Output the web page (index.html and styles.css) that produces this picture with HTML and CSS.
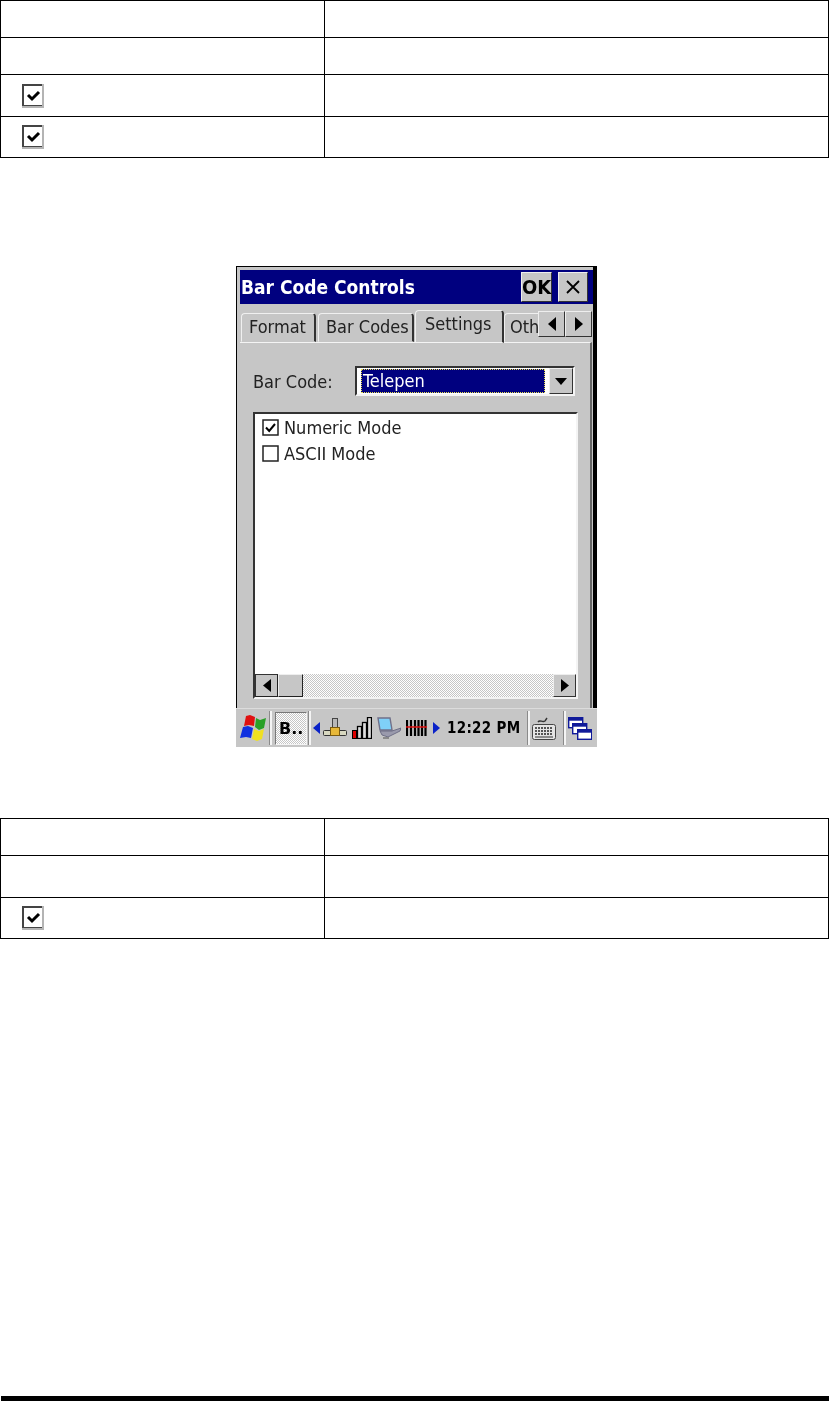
FILE: index.html
```html
<!DOCTYPE html>
<html lang="en">

<head>
	<meta charset="UTF-8">
	<title>Bar Code Controls</title>
	<link rel="stylesheet" href="styles.css">
</head>

<body>
	<table class="opts">
		<tr class="row-a"><td></td><td></td></tr>
		<tr class="row-a"><td></td><td></td></tr>
		<tr class="row-b"><td><svg class="tick" viewBox="0 0 22 24"><use href="#tick"></use></svg></td><td></td></tr>
		<tr class="row-c"><td><svg class="tick" viewBox="0 0 22 24"><use href="#tick"></use></svg></td><td></td></tr>
	</table>

	<div class="screen">
		<div class="window">
			<div class="title">
				<span class="title-text">Bar Code Controls</span>
				<span class="btn btn-ok">OK</span>
				<span class="btn btn-x">
					<svg width="18" height="18" viewBox="0 0 18 18"><path d="M3 3 15 15M15 3 3 15" stroke="#000" stroke-width="1.8" fill="none"/></svg>
				</span>
			</div>

			<div class="tabs">
				<span class="tab tab-format">Format</span>
				<span class="tab tab-codes">Bar Codes</span>
				<span class="tab tab-active">Settings</span>
				<span class="tab tab-other">Oth</span>
				<span class="arrow"><svg width="10" height="14" viewBox="0 0 10 14"><path d="M9 0V14L1 7Z"/></svg></span>
				<span class="arrow"><svg width="10" height="14" viewBox="0 0 10 14"><path d="M1 0V14L9 7Z"/></svg></span>
			</div>

			<div class="panel">
				<div class="combo-row">
					<span class="combo-label">Bar Code:</span>
					<div class="combo">
						<span class="combo-value">Telepen</span>
						<span class="combo-btn"><svg width="12" height="7" viewBox="0 0 12 7"><path d="M0 0H12L6 7Z"/></svg></span>
					</div>
				</div>

				<div class="list">
					<div class="list-items">
						<div class="item">
							<svg class="box" viewBox="0 0 17 17"><rect x="1" y="1" width="15" height="15" fill="#fff" stroke="#222" stroke-width="1.5"/><path d="M4 8.5 7.2 12 13 5" stroke="#000" stroke-width="2" fill="none"/></svg>
							Numeric Mode
						</div>
						<div class="item">
							<svg class="box" viewBox="0 0 17 17"><rect x="1" y="1" width="15" height="15" fill="#fff" stroke="#222" stroke-width="1.5"/></svg>
							ASCII Mode
						</div>
					</div>
					<div class="hscroll">
						<span class="sb-btn"><svg width="8" height="13" viewBox="0 0 8 13"><path d="M8 0V13L0 6.5Z"/></svg></span>
						<span class="sb-thumb"></span>
						<span class="sb-track"></span>
						<span class="sb-btn sb-right"><svg width="8" height="13" viewBox="0 0 8 13"><path d="M0 0V13L8 6.5Z"/></svg></span>
					</div>
				</div>
			</div>
		</div>

		<div class="taskbar">
			<!-- start flag -->
			<svg class="ic-flag" width="26" height="26" viewBox="0 0 26 26">
				<path d="M6 1 10 0 15 2 14 11 9 10 4 11Z" fill="#e01010"/>
				<path d="M16 3 20 5 26 3 24 13 19 15 15 12Z" fill="#2aa028"/>
				<path d="M3 12 8 11 13 13 11 23 6 22 0 23Z" fill="#1030e0"/>
				<path d="M14 14 19 16 24 14 22 24 17 26 12 24Z" fill="#f0e020"/>
			</svg>
			<span class="sep sep-a"></span>
			<span class="task-btn">B..</span>
			<span class="sep sep-b"></span>

			<svg class="ic-tri-l" width="7" height="12" viewBox="0 0 7 12"><path d="M7 0V12L0 6Z" fill="#0a22c8"/></svg>

			<svg class="ic-net" width="24" height="20" viewBox="0 0 24 20">
				<rect x="9.5" y=".5" width="5" height="11" fill="#b8b8b8" stroke="#444"/>
				<rect x=".5" y="12.5" width="23" height="5" rx="1" fill="#d8d8c0" stroke="#333"/>
				<rect x="7.5" y="9.5" width="9" height="8" fill="#e8b838" stroke="#7a5a10"/>
			</svg>

			<svg class="ic-signal" width="20" height="22" viewBox="0 0 20 22">
				<rect x=".5" y="13.5" width="4" height="8" fill="#d00" stroke="#000"/>
				<rect x="5.5" y="9.5" width="4" height="12" fill="#ddd" stroke="#000" stroke-width="1.3"/>
				<rect x="10.5" y="5.5" width="4" height="16" fill="#ddd" stroke="#000" stroke-width="1.3"/>
				<rect x="15.5" y=".5" width="4" height="21" fill="#ddd" stroke="#000" stroke-width="1.3"/>
			</svg>

			<svg class="ic-pc" width="24" height="22" viewBox="0 0 24 22">
				<path d="M1 1H13L15 13H3Z" fill="#7fd0f8" stroke="#70708a" stroke-width="1.4"/>
				<path d="M3 14 15 14 24 11 23 14 11 20 5 18Z" fill="#9a9aac" stroke="#60607a" stroke-width=".8"/>
				<path d="M6 21H12" stroke="#777" stroke-width="1.5"/>
			</svg>

			<svg class="ic-bars" width="21" height="16" viewBox="0 0 21 16">
				<path d="M1 0V16M5 0V16M9 0V16M12.5 0V16M16 0V16M19.5 0V16" stroke="#000" stroke-width="2.2"/>
				<path d="M0 7H21" stroke="#e01010" stroke-width="1.5"/>
			</svg>

			<svg class="ic-tri-r" width="7" height="12" viewBox="0 0 7 12"><path d="M0 0V12L7 6Z" fill="#0a22c8"/></svg>

			<span class="clock">12:22 PM</span>
			<span class="sep sep-c"></span>

			<svg class="ic-kbd" width="24" height="24" viewBox="0 0 24 24">
				<path d="M6 6C8 3 10 7 13 5L15 2" stroke="#333" stroke-width="1.4" fill="none"/>
				<rect x=".5" y="8.5" width="23" height="15" rx="2" fill="#e4e4e4" stroke="#444"/>
				<path d="M3 12H21M3 15H21M3 18H21" stroke="#555" stroke-width="1.8" stroke-dasharray="2 1"/>
				<path d="M3 21H21" stroke="#333"/>
			</svg>
			<span class="sep sep-d"></span>

			<svg class="ic-wins" width="24" height="23" viewBox="0 0 24 23">
				<rect x=".7" y=".7" width="14" height="10" fill="#fff" stroke="#101a9a" stroke-width="1.4"/>
				<rect x=".7" y=".7" width="14" height="3" fill="#101a9a"/>
				<rect x="4.7" y="6.7" width="14" height="10" fill="#fff" stroke="#101a9a" stroke-width="1.4"/>
				<rect x="4.7" y="6.7" width="14" height="3" fill="#101a9a"/>
				<rect x="9.7" y="12.7" width="14" height="9.6" fill="#fff" stroke="#101a9a" stroke-width="1.4"/>
				<rect x="9.7" y="12.7" width="14" height="3" fill="#101a9a"/>
			</svg>
		</div>
	</div>

	<table class="opts opts-lower">
		<tr class="row-a"><td></td><td></td></tr>
		<tr class="row-b"><td></td><td></td></tr>
		<tr class="row-c"><td><svg class="tick" viewBox="0 0 22 24"><use href="#tick"></use></svg></td><td></td></tr>
	</table>

	<div class="rule"></div>

	<!-- shared tick box -->
	<svg class="defs" width="0" height="0">
		<symbol id="tick" viewBox="0 0 22 24">
			<rect x="0" y="0" width="22" height="24" fill="#b4b4b4"/>
			<rect x="0" y="0" width="20" height="22" fill="#444"/>
			<rect x="2" y="2" width="18" height="19" fill="#fff"/>
			<path d="M6 11 10 15 17 8" stroke="#000" stroke-width="3" fill="none"/>
		</symbol>
	</svg>
</body>

</html>
```

FILE: styles.css
```css
:root {
	--ui-gray: #c6c6c6;
	--ui-blue: #00007f;
}

body {
	margin: 0;
	background-color: #fff;
	color: #000;
	font-family: "DejaVu Sans", Verdana, sans-serif;
}

/* Tables */
.opts {
	width: 829px;
	border-collapse: collapse;
	table-layout: fixed;
}

.opts td {
	padding: 0 0 0 21px;
	border: 1px solid #000;
}

.opts td:first-child {
	box-sizing: border-box;
	width: 324px;
}

.row-a {
	height: 37px;
}

.row-b {
	height: 42px;
}

.row-c {
	height: 41px;
}

.tick {
	display: block;
	width: 22px;
	height: 24px;
}

.opts-lower {
	margin-top: 71px;
}

.defs {
	position: absolute;
}

/* Device screen */
.screen {
	display: flex;
	flex-direction: column;
	width: 361px;
	height: 481px;
	margin: 108px 0 0 236px;
	filter: blur(0.35px);
}

.window {
	flex: 1;
	display: flex;
	flex-direction: column;
	min-height: 0;
	padding: 3px 0 0 3px;
	background-color: var(--ui-gray);
	border-top: 1px solid #000;
	border-left: 1px solid #000;
	border-right: 4px solid #000;
	font-size: 18px;
	font-stretch: condensed;
	color: #222;
}

.title {
	display: flex;
	align-items: center;
	height: 34px;
	padding: 0 5px 0 1px;
	background-color: var(--ui-blue);
	color: #fff;
}

.title-text {
	flex: 1;
	font-weight: bold;
	font-size: 19px;
}

.btn {
	display: flex;
	align-items: center;
	justify-content: center;
	box-sizing: border-box;
	width: 31px;
	height: 30px;
	background-color: var(--ui-gray);
	color: #000;
	font-weight: bold;
	font-size: 20px;
	border: 1px solid;
	border-color: #eee #333 #333 #eee;
}

.btn-ok {
	margin-right: 6px;
}

.btn-x {
	width: 30px;
}

/* Tabs */
.tabs {
	display: flex;
	align-items: flex-start;
	height: 32px;
	margin: 6px 0 0 1px;
	position: relative;
	z-index: 1;
}

.tab {
	box-sizing: border-box;
	height: 29px;
	margin-top: 3px;
	padding: 2px 0 0 7px;
	border: 1px solid;
	border-color: #f0f0f0 #333 transparent #f0f0f0;
	border-right-width: 2px;
	border-radius: 4px 4px 0 0;
	white-space: nowrap;
}

.tab-format {
	width: 75px;
	margin-right: 2px;
}

.tab-codes {
	width: 96px;
	margin-right: 1px;
}

.tab-active {
	width: 89px;
	height: 33px;
	margin-top: 0;
	padding-left: 9px;
}

.tab-other {
	width: 34px;
	padding-left: 5px;
	border-right: 0;
	border-radius: 4px 0 0 0;
}

.arrow {
	display: flex;
	align-items: center;
	justify-content: center;
	box-sizing: border-box;
	width: 27px;
	height: 26px;
	margin-top: 1px;
	background-color: var(--ui-gray);
	border: 1px solid;
	border-color: #eee #333 #333 #eee;
}

.arrow svg,
.sb-btn svg,
.combo-btn svg {
	fill: #000;
}

/* Panel */
.panel {
	flex: 1;
	min-height: 0;
	margin-right: 1px;
	padding: 23px 12px 8px 13px;
	border-top: 1px solid #f4f4f4;
	border-right: 2px solid #666;
}

.combo-row {
	display: flex;
	align-items: center;
	margin-right: 3px;
}

.combo-label {
	width: 102px;
}

.combo {
	flex: 1;
	display: flex;
	box-sizing: border-box;
	height: 30px;
	padding: 1px 0 0 4px;
	border: 2px solid;
	border-color: #333 #f4f4f4 #f4f4f4 #333;
	background-color: #fff;
}

.combo-value {
	flex: 1;
	height: 24px;
	padding-left: 2px;
	line-height: 23px;
	background-color: var(--ui-blue);
	color: #fff;
	outline: 1px dotted #e8e050;
	outline-offset: -1px;
}

.combo-btn {
	display: flex;
	align-items: center;
	justify-content: center;
	box-sizing: border-box;
	width: 24px;
	margin: -1px 0 0 4px;
	background-color: var(--ui-gray);
	border: 1px solid;
	border-color: #eee #333 #333 #eee;
}

.list {
	display: flex;
	flex-direction: column;
	box-sizing: border-box;
	height: 287px;
	margin-top: 16px;
	border: 2px solid;
	border-color: #333 #f4f4f4 #f4f4f4 #333;
	background-color: #fff;
}

.list-items {
	flex: 1;
	padding: 0 0 0 7px;
}

.item {
	display: flex;
	align-items: center;
	gap: 5px;
	height: 26px;
}

.box {
	width: 17px;
	height: 17px;
}

.hscroll {
	display: flex;
	height: 23px;
}

.sb-btn {
	display: flex;
	align-items: center;
	justify-content: center;
	box-sizing: border-box;
	width: 23px;
	background-color: var(--ui-gray);
	border: 1px solid;
	border-color: #333 #222 #222 #333;
}

.sb-thumb {
	box-sizing: border-box;
	width: 25px;
	background-color: var(--ui-gray);
	border: 1px solid;
	border-color: #eee #222 #222 #eee;
}

.sb-track {
	flex: 1;
	background-color: #fff;
	background-image: conic-gradient(var(--ui-gray) 25%, #fff 0 50%, var(--ui-gray) 0 75%, #fff 0);
	background-size: 2px 2px;
}

.sb-right {
	border-color: #eee #333 #333 #eee;
}

/* Taskbar */
.taskbar {
	display: flex;
	align-items: center;
	box-sizing: border-box;
	height: 39px;
	padding: 0 4px;
	background-color: var(--ui-gray);
	border-top: 1px solid #dcdcdc;
}

.sep {
	width: 1px;
	height: 34px;
	background-color: #8a8a8a;
	border-right: 2px solid #f4f4f4;
}

.sep-a {
	margin: 0 3px;
}

.task-btn {
	box-sizing: border-box;
	width: 32px;
	height: 33px;
	padding-left: 3px;
	line-height: 31px;
	font-size: 16px;
	font-weight: bold;
	background-color: #fff;
	background-image: conic-gradient(var(--ui-gray) 25%, #fff 0 50%, var(--ui-gray) 0 75%, #fff 0);
	background-size: 2px 2px;
	border: 1px solid;
	border-color: #777 #f4f4f4 #f4f4f4 #777;
}

.sep-b {
	margin: 0 0 0 1px;
}

.ic-tri-l {
	margin-left: 2px;
}

.ic-net {
	margin-left: 3px;
}

.ic-signal {
	margin-left: 5px;
}

.ic-pc {
	margin-left: 5px;
}

.ic-bars {
	margin-left: 5px;
}

.ic-tri-r {
	margin-left: 6px;
}

.clock {
	width: 73px;
	margin-left: 7px;
	font-size: 15px;
	font-stretch: condensed;
	letter-spacing: 0.3px;
	font-weight: bold;
	white-space: nowrap;
}

.sep-c {
	margin: 0 2px 0 7px;
}

.sep-d {
	margin: 0 2px 0 7px;
}

.rule {
	height: 5px;
	margin: 457px 0 0 1px;
	background-color: #000;
}
```
